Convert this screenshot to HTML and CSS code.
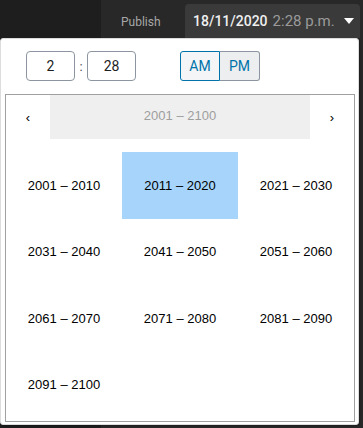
FILE: index.html
```html
<!DOCTYPE html>
<html>
<head>
<meta charset="utf-8">
<link rel="stylesheet" href="styles.css">
</head>
<body>
<div class="screen">
  <div class="side"></div>
  <div class="main">
    <div class="topbar">
      <span class="label">Publish</span>
      <button class="date-btn"><span class="date">18/11/2020</span><span class="time">2:28 p.m.</span><span class="caret"></span></button>
    </div>
  </div>
  <div class="popup">
    <div class="time-row">
      <div class="field">2</div>
      <span class="colon">:</span>
      <div class="field">28</div>
      <div class="ampm">
        <span class="seg seg-am">AM</span>
        <span class="seg seg-pm">PM</span>
      </div>
    </div>
    <div class="calendar">
      <div class="nav">
        <span class="arrow">‹</span>
        <span class="nav-label">2001 – 2100</span>
        <span class="arrow">›</span>
      </div>
      <div class="grid">
        <div class="tile">2001 – 2010</div>
        <div class="tile active">2011 – 2020</div>
        <div class="tile">2021 – 2030</div>
        <div class="tile">2031 – 2040</div>
        <div class="tile">2041 – 2050</div>
        <div class="tile">2051 – 2060</div>
        <div class="tile">2061 – 2070</div>
        <div class="tile">2071 – 2080</div>
        <div class="tile">2081 – 2090</div>
        <div class="tile">2091 – 2100</div>
      </div>
    </div>
  </div>
</div>
</body>
</html>
```

FILE: styles.css
```css
* { box-sizing: border-box; }
html, body { margin: 0; padding: 0; }
body { width: 363px; height: 428px; overflow: hidden; font-family: Roboto, "Liberation Sans", sans-serif; }
.screen { position: relative; display: flex; width: 363px; height: 428px; }
.side { width: 101px; background: #1e1e1e; }
.main { flex: 1; background: #282828; }
.topbar { display: flex; align-items: flex-start; padding-top: 4px; }
.label { color: #a7a7a7; font-size: 12px; margin: 11px 0 0 20px; width: 64px; }
.date-btn {
  display: flex; align-items: center; height: 34px; width: 175px;
  background: #3a3a3a; border: 0; border-radius: 4px 4px 0 0; white-space: nowrap;
  padding: 0 0 0 8px; font-family: Roboto, "Liberation Sans", sans-serif; font-size: 14px;
}
.date { color: #f0f0f0; font-weight: 500; }
.time { color: #9a9a9a; margin-left: 5px; font-size: 15px; }
.caret { width: 0; height: 0; border-left: 5px solid transparent; border-right: 5px solid transparent; border-top: 6px solid #fff; margin-left: 9px; }
.popup {
  position: absolute; left: 0; top: 38px; width: 359px; height: 387px;
  background: #fff; border-radius: 3px; border: 1px solid #ddd;
  box-shadow: 1px 1px 2px rgba(0,0,0,0.3);
  padding: 12px 4px 0 4px;
}
.time-row { display: flex; align-items: center; padding-left: 21px; height: 30px; }
.field {
  width: 49px; height: 30px; border: 1px solid #8d96a0; border-radius: 4px;
  display: flex; align-items: center; justify-content: center;
  font-size: 14px; color: #1e1e1e;
}
.colon { width: 12px; text-align: center; font-size: 13px; color: #555; }
.ampm { display: flex; margin-left: 44px; }
.seg { width: 40px; height: 30px; display: flex; align-items: center; justify-content: center; font-size: 14px; color: #0073aa; }
.seg-am { background: #f3f5f6; border: 1px solid #0073aa; border-radius: 3px 0 0 3px; }
.seg-pm { background: #eceeef; border: 1px solid #8d96a0; border-left: 0; border-radius: 0 3px 3px 0; }
.calendar {
  margin-top: 13px; width: 350px; height: 328px; border: 1px solid #a0a0a0;
  font-family: Arial, "Liberation Sans", sans-serif; font-size: 13px; color: #000;
}
.nav { display: flex; height: 44px; margin-bottom: 13px; }
.arrow { width: 44px; display: flex; align-items: center; justify-content: center; font-size: 13px; }
.nav-label { flex: 1; background: #efefef; color: #9e9e9e; display: flex; align-items: center; justify-content: center; font-size: 13px; padding-bottom: 3px; }
.grid { display: grid; grid-template-columns: repeat(3, 116px); grid-auto-rows: 66.5px; }
.tile { display: flex; align-items: center; justify-content: center; }
.active { background: #a6d4fa; }
```
